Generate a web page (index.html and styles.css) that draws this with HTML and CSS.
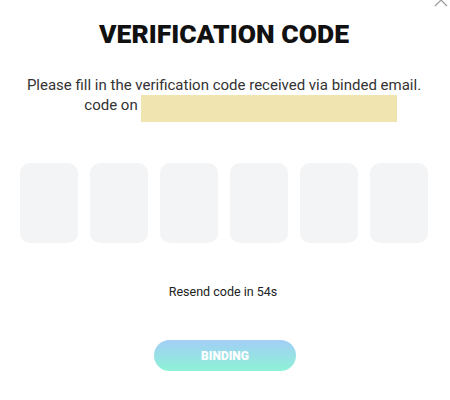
FILE: index.html
```html
<!DOCTYPE html>
<html lang="en">
<head>
    <meta charset="UTF-8">
    <meta name="viewport" content="width=device-width, initial-scale=1.0">
    <title>Verification code</title>
    <link rel="stylesheet" href="styles.css">
</head>
<body>
    <div class="dialog">
        <button class="close_btn" type="button" aria-label="close">
            <svg width="14" height="14" viewBox="0 0 14 14">
                <path d="M1 1 L13 13 M13 1 L1 13" stroke="#9a9a9a" stroke-width="1.2" fill="none"/>
            </svg>
        </button>

        <h1 class="title">VERIFICATION CODE</h1>

        <p class="desc">Please fill in the verification code received via binded email.</p>
        <p class="desc_email">code on <span class="email_mask"></span></p>

        <div class="code_row">
            <input class="code_box" type="text" maxlength="1">
            <input class="code_box" type="text" maxlength="1">
            <input class="code_box" type="text" maxlength="1">
            <input class="code_box" type="text" maxlength="1">
            <input class="code_box" type="text" maxlength="1">
            <input class="code_box" type="text" maxlength="1">
        </div>

        <p class="resend">Resend code in 54s</p>

        <div class="btn_wrap">
            <button class="bind_btn" type="button">BINDING</button>
        </div>
    </div>
</body>
</html>
```

FILE: styles.css
```css
body{
    margin: 0;
    background: #fff;
    font-family: Roboto, "Liberation Sans", sans-serif;
    color: #333;
}
.dialog{
    position: relative;
    width: 450px;
    height: 400px;
    overflow: hidden;
}
.close_btn{
    position: absolute;
    top: -7px;
    right: 2px;
    padding: 0;
    border: none;
    background: none;
}
.title{
    margin: 0;
    padding-top: 16px;
    padding-right: 2px;
    text-align: center;
    font-size: 26.5px;
    font-weight: 900;
    color: #111;
    line-height: 36px;
}
.desc{
    margin: 23px 0 0;
    text-align: center;
    font-size: 15px;
    line-height: 20px;
    padding-right: 2px;
}
.desc_email{
    margin: 0;
    display: flex;
    justify-content: center;
    align-items: flex-start;
    gap: 3px;
    font-size: 15px;
    line-height: 20px;
    padding-left: 31px;
}
.email_mask{
    display: inline-block;
    width: 256px;
    height: 27px;
    background: #f0e4b0;
}
.code_row{
    display: flex;
    justify-content: center;
    gap: 12px;
    margin-top: 41px;
    padding-right: 2px;
}
.code_box{
    width: 58px;
    height: 80px;
    box-sizing: border-box;
    border: none;
    border-radius: 10px;
    background: #f3f4f6;
    text-align: center;
    font-size: 28px;
}
.resend{
    margin: 41px 0 0;
    text-align: center;
    font-size: 12.5px;
    color: #222;
    padding-right: 4px;
}
.btn_wrap{
    display: flex;
    justify-content: center;
    margin-top: 41px;
}
.bind_btn{
    width: 142px;
    height: 31px;
    border: none;
    border-radius: 16px;
    background: linear-gradient(180deg, #a2cef6, #8ef2d6);
    color: #fff;
    font-family: Roboto, "Liberation Sans", sans-serif;
    font-weight: 900;
    font-size: 12px;
}
```
